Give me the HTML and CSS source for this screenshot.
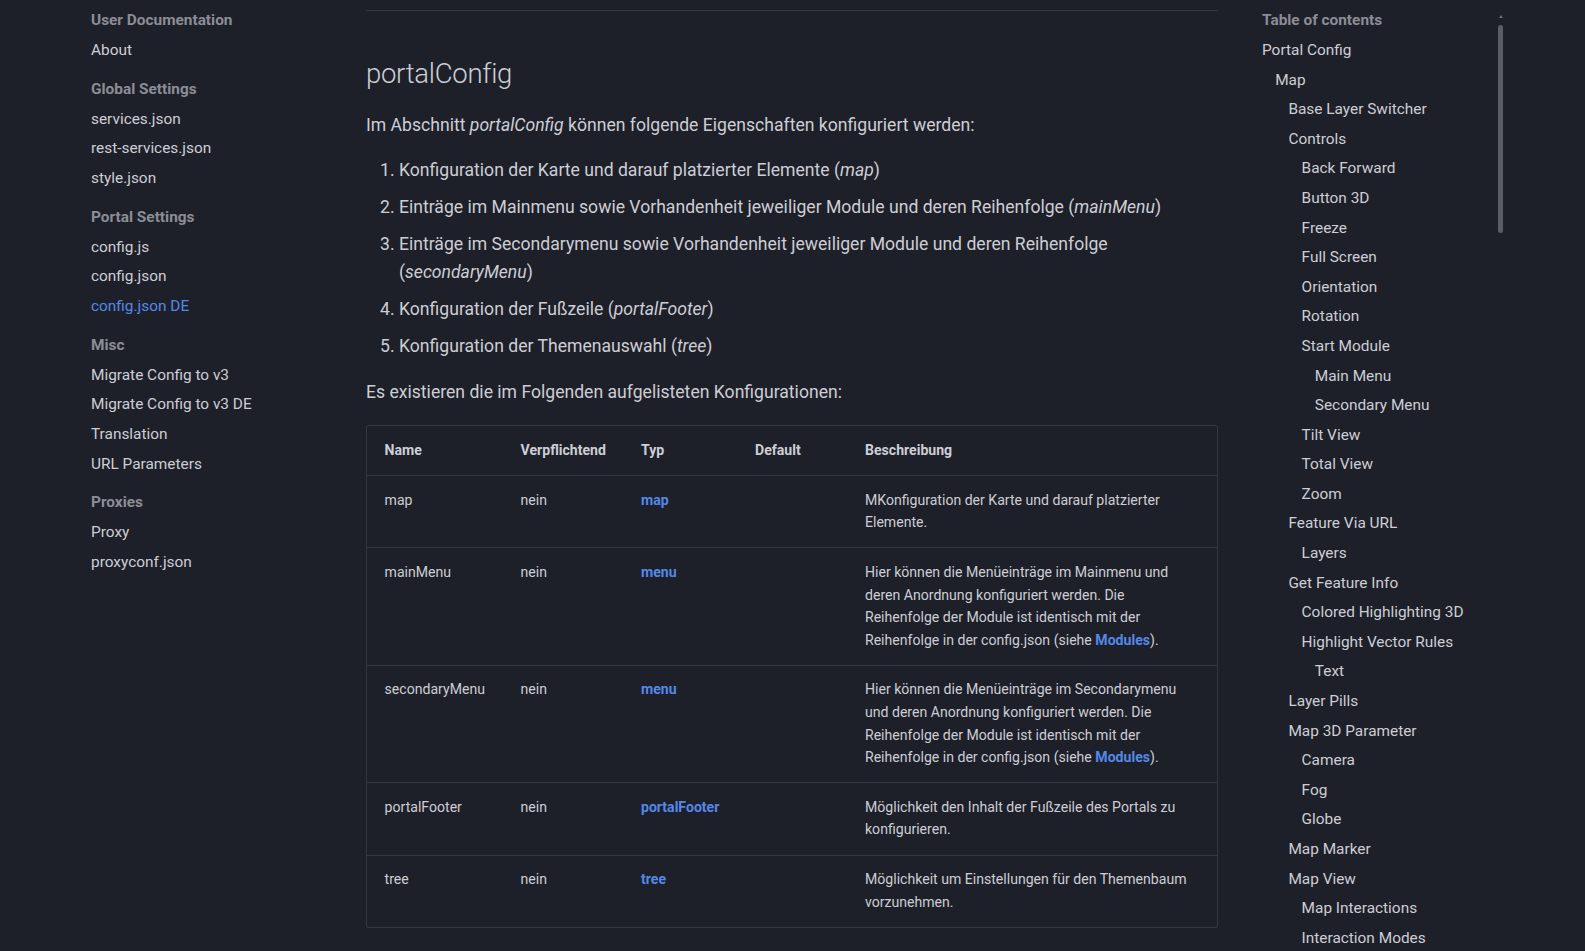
FILE: index.html
```html
<!DOCTYPE html>
<html lang="de">
<head>
<meta charset="utf-8">
<title>portalConfig</title>
<link rel="stylesheet" href="styles.css">
</head>
<body>
<div class="page">
  <nav class="sidebar">
    <div class="nav-section">
      <div class="nav-title">User Documentation</div>
      <a class="nav-link">About</a>
    </div>
    <div class="nav-section">
      <div class="nav-title">Global Settings</div>
      <a class="nav-link">services.json</a>
      <a class="nav-link">rest-services.json</a>
      <a class="nav-link">style.json</a>
    </div>
    <div class="nav-section">
      <div class="nav-title">Portal Settings</div>
      <a class="nav-link">config.js</a>
      <a class="nav-link">config.json</a>
      <a class="nav-link active">config.json DE</a>
    </div>
    <div class="nav-section">
      <div class="nav-title">Misc</div>
      <a class="nav-link">Migrate Config to v3</a>
      <a class="nav-link">Migrate Config to v3 DE</a>
      <a class="nav-link">Translation</a>
      <a class="nav-link">URL Parameters</a>
    </div>
    <div class="nav-section">
      <div class="nav-title">Proxies</div>
      <a class="nav-link">Proxy</a>
      <a class="nav-link">proxyconf.json</a>
    </div>
  </nav>

  <main class="content">
    <div class="rule"></div>
    <h2 class="heading">portalConfig</h2>
    <p class="para">Im Abschnitt <em>portalConfig</em> können folgende Eigenschaften konfiguriert werden:</p>
    <ol class="steps">
      <li>Konfiguration der Karte und darauf platzierter Elemente (<em>map</em>)</li>
      <li>Einträge im Mainmenu sowie Vorhandenheit jeweiliger Module und deren Reihenfolge (<em>mainMenu</em>)</li>
      <li>Einträge im Secondarymenu sowie Vorhandenheit jeweiliger Module und deren Reihenfolge (<em>secondaryMenu</em>)</li>
      <li>Konfiguration der Fußzeile (<em>portalFooter</em>)</li>
      <li>Konfiguration der Themenauswahl (<em>tree</em>)</li>
    </ol>
    <p class="para">Es existieren die im Folgenden aufgelisteten Konfigurationen:</p>

    <div class="table-wrap">
      <table class="config-table">
        <thead>
          <tr>
            <th class="col-name">Name</th>
            <th class="col-req">Verpflichtend</th>
            <th class="col-type">Typ</th>
            <th class="col-default">Default</th>
            <th class="col-desc">Beschreibung</th>
          </tr>
        </thead>
        <tbody>
          <tr>
            <td>map</td>
            <td>nein</td>
            <td><a class="link">map</a></td>
            <td></td>
            <td>MKonfiguration der Karte und darauf platzierter Elemente.</td>
          </tr>
          <tr>
            <td>mainMenu</td>
            <td>nein</td>
            <td><a class="link">menu</a></td>
            <td></td>
            <td>Hier können die Menüeinträge im Mainmenu und deren Anordnung konfiguriert werden. Die Reihenfolge der Module ist identisch mit der Reihenfolge in der config.json (siehe <a class="link">Modules</a>).</td>
          </tr>
          <tr>
            <td>secondaryMenu</td>
            <td>nein</td>
            <td><a class="link">menu</a></td>
            <td></td>
            <td>Hier können die Menüeinträge im Secondarymenu und deren Anordnung konfiguriert werden. Die Reihenfolge der Module ist identisch mit der Reihenfolge in der config.json (siehe <a class="link">Modules</a>).</td>
          </tr>
          <tr>
            <td>portalFooter</td>
            <td>nein</td>
            <td><a class="link">portalFooter</a></td>
            <td></td>
            <td>Möglichkeit den Inhalt der Fußzeile des Portals zu konfigurieren.</td>
          </tr>
          <tr>
            <td>tree</td>
            <td>nein</td>
            <td><a class="link">tree</a></td>
            <td></td>
            <td>Möglichkeit um Einstellungen für den Themenbaum vorzunehmen.</td>
          </tr>
        </tbody>
      </table>
    </div>
  </main>

  <aside class="toc">
    <div class="toc-title">Table of contents</div>
    <ul class="toc-list">
      <li class="l0">Portal Config</li>
      <li class="l1">Map</li>
      <li class="l2">Base Layer Switcher</li>
      <li class="l2">Controls</li>
      <li class="l3">Back Forward</li>
      <li class="l3">Button 3D</li>
      <li class="l3">Freeze</li>
      <li class="l3">Full Screen</li>
      <li class="l3">Orientation</li>
      <li class="l3">Rotation</li>
      <li class="l3">Start Module</li>
      <li class="l4">Main Menu</li>
      <li class="l4">Secondary Menu</li>
      <li class="l3">Tilt View</li>
      <li class="l3">Total View</li>
      <li class="l3">Zoom</li>
      <li class="l2">Feature Via URL</li>
      <li class="l3">Layers</li>
      <li class="l2">Get Feature Info</li>
      <li class="l3">Colored Highlighting 3D</li>
      <li class="l3">Highlight Vector Rules</li>
      <li class="l4">Text</li>
      <li class="l2">Layer Pills</li>
      <li class="l2">Map 3D Parameter</li>
      <li class="l3">Camera</li>
      <li class="l3">Fog</li>
      <li class="l3">Globe</li>
      <li class="l2">Map Marker</li>
      <li class="l2">Map View</li>
      <li class="l3">Map Interactions</li>
      <li class="l3">Interaction Modes</li>
    </ul>
    <div class="scroll-arrow"></div>
    <div class="scroll-thumb"></div>
  </aside>
</div>
</body>
</html>
```

FILE: styles.css
```css
html, body {
  margin: 0;
  padding: 0;
  height: 100%;
  overflow: hidden;
}

body {
  background: #1e2029;
  color: #cdced5;
  font-family: Roboto, "Liberation Sans", Arial, sans-serif;
  -webkit-font-smoothing: antialiased;
}

.page {
  display: flex;
  align-items: flex-start;
  padding: 10px 0 0 91px;
  height: 100%;
  box-sizing: border-box;
}

/* ---------- Left navigation ---------- */
.sidebar {
  width: 275px;
  flex: none;
  font-size: 15.4px;
}

.nav-section + .nav-section {
  margin-top: 18.7px;
}

.nav-title {
  line-height: 20px;
  font-weight: 700;
  color: #8b8d96;
  padding-bottom: 0.4px;
}

.nav-link {
  display: block;
  line-height: 20px;
  margin-top: 9.65px;
  color: #cdced5;
}

.nav-link.active {
  color: #5488e8;
}

/* ---------- Main content ---------- */
.content {
  width: 852px;
  flex: none;
}

.rule {
  height: 1px;
  background: #353741;
}

.heading {
  font-size: 27.5px;
  font-weight: 300;
  line-height: 1.4;
  margin: 43.5px 0 17.6px;
  color: #cdced5;
  letter-spacing: -0.01em;
}

.para {
  font-size: 17.6px;
  line-height: 1.6;
  margin: 0 0 17.6px;
}

.steps {
  font-size: 17.6px;
  line-height: 1.6;
  margin: 0 0 17.6px 11px;
  padding: 0;
}

.steps li {
  margin: 0 0 8.8px 22px;
  padding: 0;
}

.steps li:last-child {
  margin-bottom: 0;
}

/* ---------- Table ---------- */
.table-wrap {
  margin-top: 19px;
  border: 1px solid #353741;
  border-radius: 2px;
}

.config-table {
  width: 100%;
  border-collapse: separate;
  border-spacing: 0;
  table-layout: fixed;
  font-size: 14.08px;
  line-height: 1.6;
}

.config-table th,
.config-table td {
  box-sizing: border-box;
  text-align: left;
  vertical-align: top;
  padding: 12.6px 17.6px 13.8px;
}

.config-table th {
  font-weight: 700;
  color: #cdced5;
}

.config-table td {
  border-top: 1px solid #353741;
}

.col-name { width: 136px; }
.col-req { width: 120.4px; }
.col-type { width: 114px; }
.col-default { width: 110px; }
.col-desc { width: auto; }

.link {
  color: #5488e8;
  font-weight: 700;
  text-decoration: none;
}

/* ---------- Table of contents ---------- */
.toc {
  position: relative;
  width: 243px;
  margin-left: 44px;
  flex: none;
  font-size: 15.4px;
  height: 941px;
  overflow: hidden;
}

.toc-title {
  line-height: 20px;
  font-weight: 700;
  color: #8b8d96;
  padding-bottom: 0.4px;
}

.toc-list {
  list-style: none;
  margin: 0;
  padding: 0;
}

.toc-list li {
  line-height: 20px;
  margin-top: 9.6px;
  white-space: nowrap;
}

.toc-list .l1 { padding-left: 13.2px; }
.toc-list .l2 { padding-left: 26.4px; }
.toc-list .l3 { padding-left: 39.6px; }
.toc-list .l4 { padding-left: 52.8px; }

.scroll-arrow {
  position: absolute;
  top: 5px;
  right: 2px;
  width: 0;
  height: 0;
  border-left: 2.5px solid transparent;
  border-right: 2.5px solid transparent;
  border-bottom: 3px solid #6a6c75;
}

.scroll-thumb {
  position: absolute;
  top: 15px;
  right: 2px;
  width: 5px;
  height: 208px;
  border-radius: 3px;
  background: #5b5d66;
}
```
